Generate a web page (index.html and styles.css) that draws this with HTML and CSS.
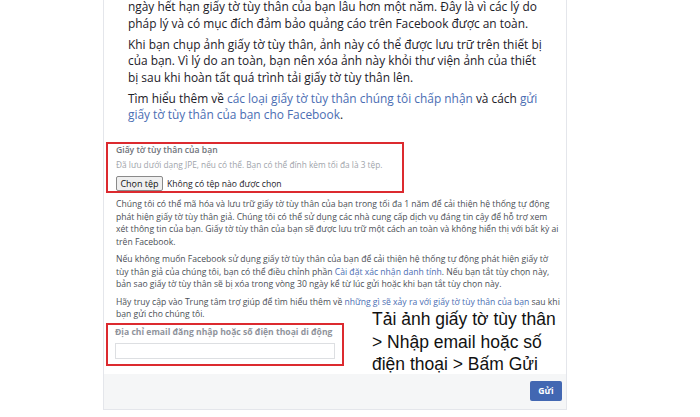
FILE: index.html
```html
<!DOCTYPE html>
<html lang="vi">
<head>
<meta charset="utf-8">
<title>Giấy tờ tùy thân</title>
<link rel="stylesheet" href="styles.css">
</head>
<body>
<div class="card">
  <div class="intro">
    <p>ngày hết hạn giấy tờ tùy thân của bạn lâu hơn một năm. Đây là vì các lý do pháp lý và có mục đích đảm bảo quảng cáo trên Facebook được an toàn.</p>
    <p>Khi bạn chụp ảnh giấy tờ tùy thân, ảnh này có thể được lưu trữ trên thiết bị của bạn. Vì lý do an toàn, bạn nên xóa ảnh này khỏi thư viện ảnh của thiết bị sau khi hoàn tất quá trình tải giấy tờ tùy thân lên.</p>
    <p>Tìm hiểu thêm về <a class="link">các loại giấy tờ tùy thân chúng tôi chấp nhận</a> và cách <a class="link">gửi giấy tờ tùy thân của bạn cho Facebook</a>.</p>
  </div>
  <div class="form">
    <div class="hl hl-upload">
      <div class="label">Giấy tờ tùy thân của bạn</div>
      <div class="desc">Đã lưu dưới dạng JPE, nếu có thể. Bạn có thể đính kèm tối đa là 3 tệp.</div>
      <div class="file-row">
        <span class="file-btn">Chọn tệp</span>
        <span class="file-none">Không có tệp nào được chọn</span>
      </div>
    </div>
    <p class="small">Chúng tôi có thể mã hóa và lưu trữ giấy tờ tùy thân của bạn trong tối đa 1 năm để cải thiện hệ thống tự động phát hiện giấy tờ tùy thân giả. Chúng tôi có thể sử dụng các nhà cung cấp dịch vụ đáng tin cậy để hỗ trợ xem xét thông tin của bạn. Giấy tờ tùy thân của bạn sẽ được lưu trữ một cách an toàn và không hiển thị với bất kỳ ai trên Facebook.</p>
    <p class="small">Nếu không muốn Facebook sử dụng giấy tờ tùy thân của bạn để cải thiện hệ thống tự động phát hiện giấy tờ tùy thân giả của chúng tôi, bạn có thể điều chỉnh phần <a class="link">Cài đặt xác nhận danh tính</a>. Nếu bạn tắt tùy chọn này, bản sao giấy tờ tùy thân sẽ bị xóa trong vòng 30 ngày kể từ lúc gửi hoặc khi bạn tắt tùy chọn này.</p>
    <p class="small">Hãy truy cập vào Trung tâm trợ giúp để tìm hiểu thêm về <a class="link">những gì sẽ xảy ra với giấy tờ tùy thân của bạn</a> sau khi bạn gửi cho chúng tôi.</p>
    <div class="hl hl-email">
      <div class="label label-email">Địa chỉ email đăng nhập hoặc số điện thoại di động</div>
      <div class="input"></div>
    </div>
  </div>
  <div class="footer">
    <span class="send">Gửi</span>
  </div>
  <div class="note">Tải ảnh giấy tờ tùy thân<br>&gt; Nhập email hoặc số<br>điện thoại &gt; Bấm Gửi</div>
</div>
</body>
</html>
```

FILE: styles.css
```css
html, body {
  margin: 0;
  padding: 0;
  background: #ffffff;
}

body {
  font-family: "Open Sans", "Liberation Sans", sans-serif;
  color: #1d2129;
}

.card {
  position: relative;
  box-sizing: border-box;
  width: 464px;
  margin-left: 103px;
  border: 1px solid #e4e6eb;
  border-top: none;
}

.intro {
  padding: 0 24px;
}

.intro p {
  margin: 0 0 4.5px;
  font-size: 11.9px;
  line-height: 16.5px;
  color: #1d2129;
}

.intro p:first-child {
  margin-top: -2px;
}

.link {
  color: #4b6eb3;
  text-decoration: none;
}

.form {
  padding: 15px 6px 0 12px;
}

.hl {
  box-sizing: border-box;
  margin-left: -10px;
  border: 2px solid #dc2a2f;
  padding: 0 8px;
}

.hl-upload {
  width: 298px;
  height: 51px;
  padding-top: 1px;
}

.label {
  font-size: 8.6px;
  line-height: 11px;
  color: #6f737a;
  font-weight: 600;
}

.desc {
  margin-top: 3px;
  font-size: 8.3px;
  line-height: 11px;
  color: #a0a4ab;
}

.file-row {
  display: flex;
  align-items: center;
  gap: 4px;
  margin-top: 6px;
}

.file-btn {
  box-sizing: border-box;
  height: 15px;
  width: 47px;
  display: flex;
  align-items: center;
  justify-content: center;
  border: 1px solid #8a8a8a;
  border-radius: 2px;
  background: #efefef;
  font-size: 9px;
  color: #111;
}

.file-none {
  font-size: 8.6px;
  color: #1d2129;
}

.small {
  margin: 5px 0 0;
  font-size: 8.6px;
  line-height: 12.5px;
  color: #4b4f56;
}

.hl-email {
  width: 238px;
  height: 43px;
  margin-top: 2.5px;
  padding: 1px 7px 0;
}

.label-email {
  color: #90949c;
  font-weight: 700;
  line-height: 12px;
}

.input {
  margin-top: 5px;
  height: 16px;
  box-sizing: border-box;
  border: 1px solid #dddfe2;
  background: #fff;
}

.footer {
  margin-top: 8px;
  height: 35px;
  box-sizing: border-box;
  background: #f5f6f7;
  display: flex;
  justify-content: flex-end;
  align-items: flex-start;
  padding: 7px 4px 0 0;
}

.send {
  width: 32px;
  height: 20px;
  display: flex;
  align-items: center;
  justify-content: center;
  background: #4267b2;
  border-radius: 2px;
  color: #fff;
  font-size: 8.6px;
  font-weight: 700;
}

.note {
  position: absolute;
  left: 268px;
  top: 310px;
  font-family: "Liberation Sans", Arial, sans-serif;
  font-size: 17.5px;
  line-height: 22.7px;
  color: #111;
}
```
